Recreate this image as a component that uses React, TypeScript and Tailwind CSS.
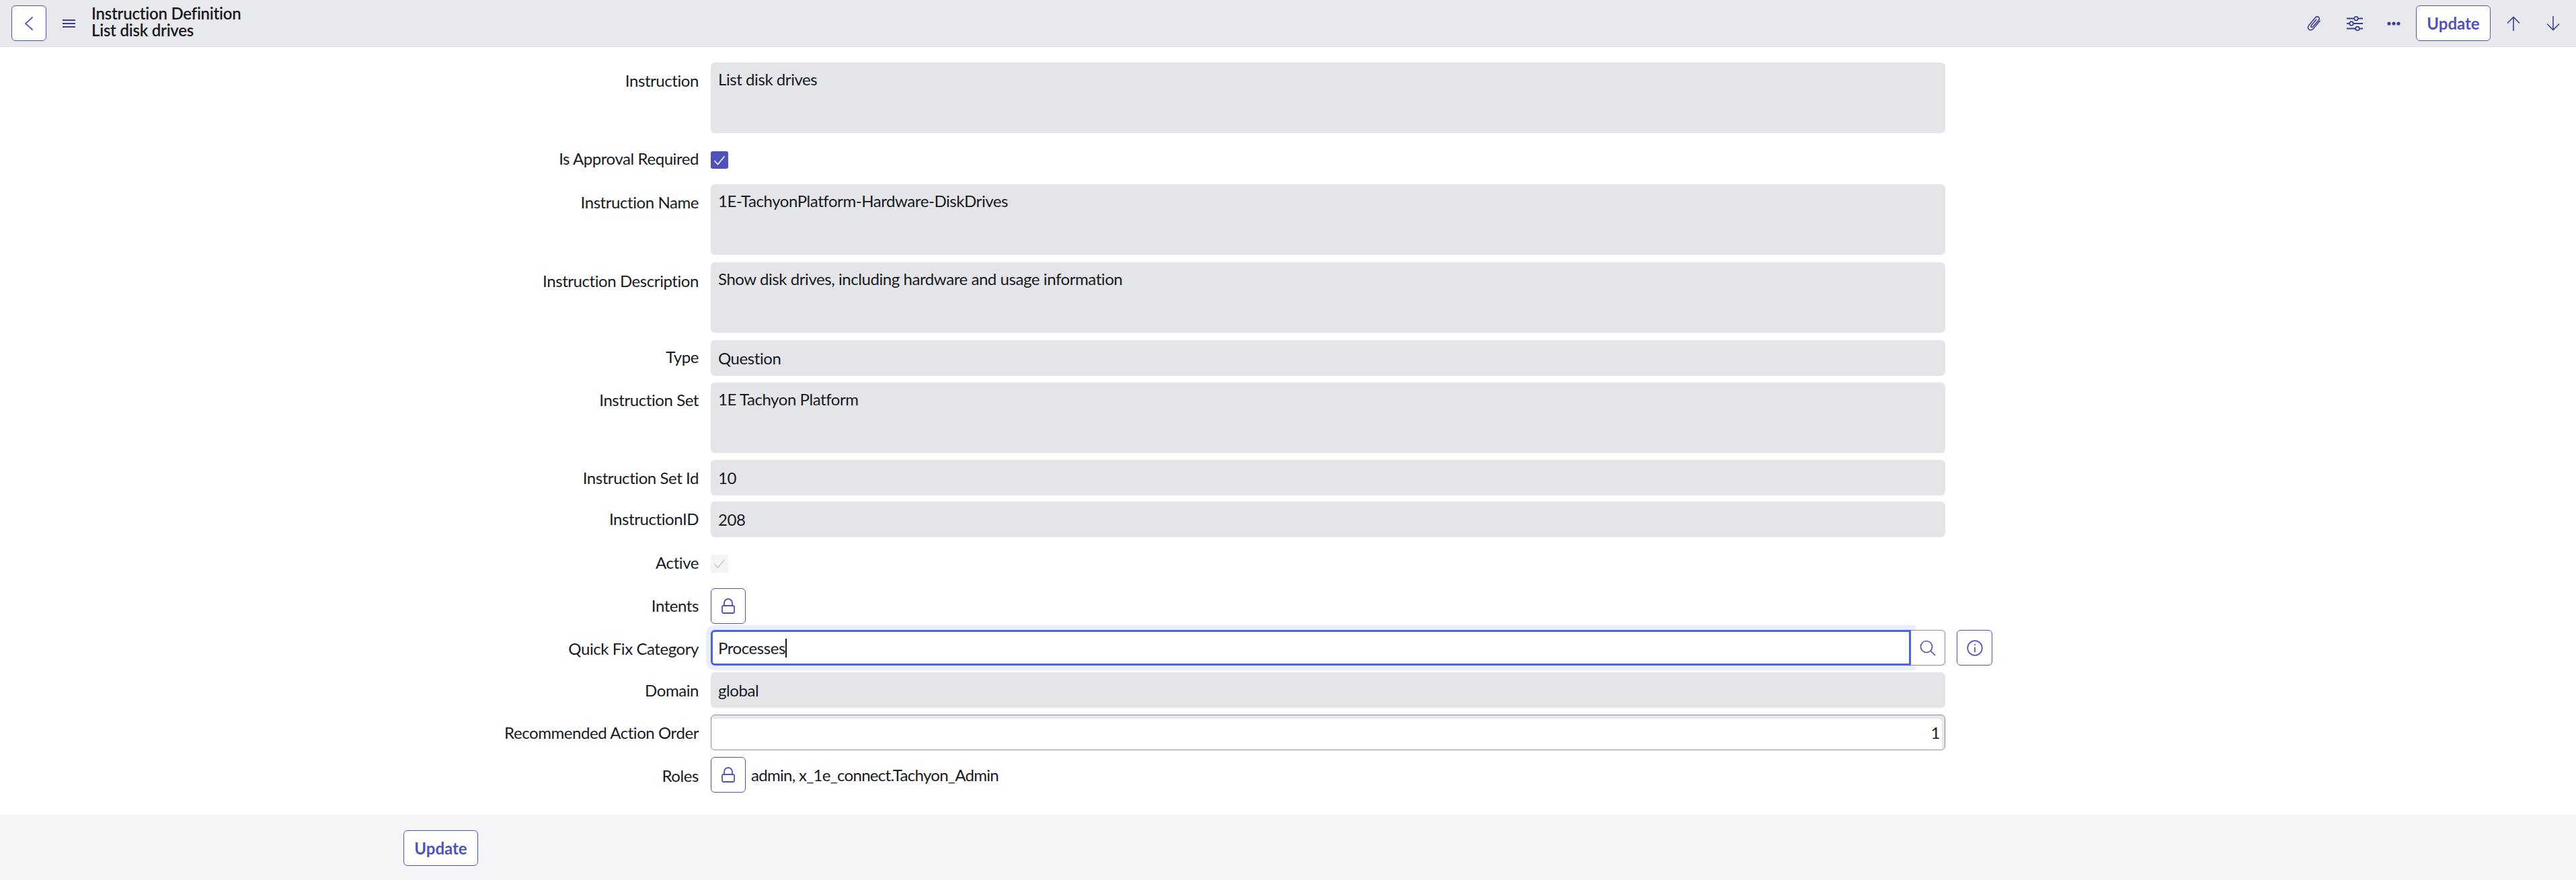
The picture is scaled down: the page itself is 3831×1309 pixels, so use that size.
const font = "font-['Lato','Noto_Sans',sans-serif]";

function Lock() {
  return (
    <svg width="20" height="23" viewBox="0 0 20 23" fill="none" stroke="#4f52bd" strokeWidth="1.800">
      <path d="M4 11V7a6 6 0 0 1 12 0v4" />
      <rect x="1" y="11" width="18" height="11" rx="2" />
    </svg>
  );
}

function Check({ color }: { color: string }) {
  return (
    <svg width="18" height="15" viewBox="0 0 18 15" fill="none" stroke={color} strokeWidth="1.6">
      <path d="M1.5 8l5 5.5L16.5 1.5" />
    </svg>
  );
}

function Row(prop: { label: string; className?: string; labelClass?: string; children: React.ReactNode }) {
  return (
    <div className={`flex ${prop.className ?? ''}`}>
      <div className={`w-[1039px] shrink-0 text-right text-[#181a1f] ${prop.labelClass ?? 'pt-[9px]'}`}>{prop.label}</div>
      <div className="ml-[18px] flex flex-1">{prop.children}</div>
    </div>
  );
}

function ReadOnly(prop: { value: string; tall?: boolean }) {
  return (
    <div className={`w-[1836px] rounded-[6px] bg-[#e4e5e9] px-[11px] text-[#181a1f] ${prop.tall ? 'h-[105px] pt-[10px]' : 'flex h-[53px] items-center'}`}>
      {prop.value}
    </div>
  );
}

function LockButton() {
  return (
    <button className="flex h-[53px] w-[52px] items-center justify-center rounded-[6px] border border-[#4f52bd] bg-white">
      <Lock />
    </button>
  );
}

function OutlineButton(prop: { className?: string }) {
  return (
    <button className={`h-[53px] w-[111px] rounded-[6px] border border-[#4f52bd] bg-white text-[24px] font-bold tracking-normal text-[#4f52bd] ${prop.className ?? ''}`}>
      Update
    </button>
  );
}

export default function App() {
  return (
    <div className={`flex h-[1309px] w-[3831px] flex-col overflow-hidden bg-white text-[24px] leading-[30px] tracking-[-0.43px] ${font}`}>
      <header className="flex h-[70px] shrink-0 items-center border-b border-[#e0e1e5] bg-[#e8e9ed] pl-[17px] pr-[24px]">
        <button className="flex h-[53px] w-[52px] items-center justify-center rounded-[6px] border border-[#4f52bd] bg-white">
          <svg width="14" height="22" viewBox="0 0 14 22" fill="none" stroke="#4f52bd" strokeWidth="1.7">
            <path d="M12.5 1.5L2 11l10.5 9.5" />
          </svg>
        </button>
        <svg className="ml-[24px]" width="19" height="14" viewBox="0 0 19 14" fill="none" stroke="#3c3f8f" strokeWidth="2">
          <path d="M0 2h19M0 7h19M0 12h19" />
        </svg>
        <div className="mb-[5px] ml-[24px] text-[24px] font-semibold leading-[25px] tracking-[-0.23px] text-[#181a1f]">
          <div>Instruction Definition</div>
          <div>List disk drives</div>
        </div>
        <div className="ml-auto flex items-center">
          <svg width="22" height="24" viewBox="0 0 22 24" fill="none" stroke="#3c3f8f" strokeWidth="1.6">
            <path d="M19.5 7.5L9.5 19.5c-2 2.4-4.6 2.9-6.5 1.3s-1.9-4.2.1-6.6L12 3.5c1.6-1.9 3.6-2.4 5.1-1.2s1.4 3.2-.2 5.1L9 16.5c-.9 1-2 1.3-2.7.7s-.6-1.7.3-2.8l7.6-9" />
          </svg>
          <svg className="ml-[37px]" width="24" height="22" viewBox="0 0 24 22" fill="none" stroke="#3c3f8f" strokeWidth="1.8">
            <path d="M0 3.5h11M17 3.5h7M0 11h4M10 11h14M0 18.500h13M19 18.500h5" />
            <circle cx="14" cy="3.500" r="2.800" />
            <circle cx="7" cy="11" r="2.800" />
            <circle cx="16" cy="18.500" r="2.800" />
          </svg>
          <svg className="ml-[36px]" width="20" height="6" viewBox="0 0 20 6" fill="#3c3f8f">
            <circle cx="3" cy="3" r="2.600" />
            <circle cx="10" cy="3" r="2.600" />
            <circle cx="17" cy="3" r="2.600" />
          </svg>
          <OutlineButton className="ml-[23px]" />
          <svg className="ml-[24px]" width="20" height="22" viewBox="0 0 20 22" fill="none" stroke="#3c3f8f" strokeWidth="1.6">
            <path d="M10 22V1.500M1 10.500l9-9 9 9" />
          </svg>
          <svg className="ml-[39px]" width="20" height="22" viewBox="0 0 20 22" fill="none" stroke="#3c3f8f" strokeWidth="1.6">
            <path d="M10 0v20.500M1 11.500l9 9 9-9" />
          </svg>
        </div>
      </header>

      <main className="flex-1 pt-[23px]">
        <Row label="Instruction" labelClass="pt-[12px]">
          <ReadOnly tall value="List disk drives" />
        </Row>
        <Row label="Is Approval Required" className="mt-[27px]" labelClass="leading-[26px] -mt-[2px]">
          <div className="flex h-[26px] w-[26px] items-center justify-center rounded-[3px] bg-[#4f52bd]">
            <Check color="#ffffff" />
          </div>
        </Row>
        <Row label="Instruction Name" className="mt-[23px]" labelClass="pt-[12px]">
          <ReadOnly tall value="1E-TachyonPlatform-Hardware-DiskDrives" />
        </Row>
        <Row label="Instruction Description" className="mt-[11px]" labelClass="pt-[13px]">
          <ReadOnly tall value="Show disk drives, including hardware and usage information" />
        </Row>
        <Row label="Type" className="mt-[11px]" labelClass="pt-[10px]">
          <ReadOnly value="Question" />
        </Row>
        <Row label="Instruction Set" className="mt-[10px]" labelClass="pt-[11px]">
          <ReadOnly tall value="1E Tachyon Platform" />
        </Row>
        <Row label="Instruction Set Id" className="mt-[10px]" labelClass="pt-[12px]">
          <ReadOnly value="10" />
        </Row>
        <Row label="InstructionID" className="mt-[9px]" labelClass="pt-[11px]">
          <ReadOnly value="208" />
        </Row>
        <Row label="Active" className="mt-[26px]" labelClass="leading-[27px] -mt-[2px]">
          <div className="flex h-[27px] w-[26px] items-center justify-center rounded-[3px] bg-[#f4f4f6]">
            <Check color="#c9cacf" />
          </div>
        </Row>
        <Row label="Intents" className="mt-[23px]" labelClass="pt-[11px]">
          <LockButton />
        </Row>
        <Row label="Quick Fix Category" className="mt-[9px]" labelClass="pt-[13px]">
          <div className="flex h-[53px] w-[1785px] items-center rounded-l-[6px] border-[3px] border-[#4a62e8] bg-white pl-[8px] text-[#181a1f] shadow-[0_0_0_7px_#eaedfc]">
            Processes
            <span className="h-[28px] w-[2px] bg-[#181a1f]" />
          </div>
          <button className="flex h-[53px] w-[51px] items-center justify-center rounded-r-[6px] border border-l-0 border-[#868e96] bg-white">
            <svg width="24" height="24" viewBox="0 0 24 24" fill="none" stroke="#4f52bd" strokeWidth="1.7">
              <circle cx="10" cy="10" r="8.500" />
              <path d="M16 16l7 7" />
            </svg>
          </button>
          <button className="ml-[17px] flex h-[53px] w-[53px] items-center justify-center rounded-[6px] border border-[#4f52bd] bg-white">
            <svg width="24" height="24" viewBox="0 0 24 24" fill="none" stroke="#4f52bd" strokeWidth="1.7">
              <circle cx="12" cy="12" r="10.800" />
              <path d="M12 10.500V18M12 6v2" />
            </svg>
          </button>
        </Row>
        <Row label="Domain" className="mt-[10px]" labelClass="pt-[12px]">
          <ReadOnly value="global" />
        </Row>
        <Row label="Recommended Action Order" className="mt-[10px]" labelClass="pt-[12px]">
          <div className="flex h-[53px] w-[1836px] items-center justify-end rounded-[6px] border border-[#868e96] bg-white pr-[7px] text-[#181a1f] shadow-[inset_-4px_5px_0_#e6e7ea]">
            1
          </div>
        </Row>
        <Row label="Roles" className="mt-[10px]" labelClass="pt-[13px]">
          <LockButton />
          <div className="ml-[8px] flex items-center tracking-[-0.7px] text-[#181a1f]">admin, x_1e_connect.Tachyon_Admin</div>
        </Row>
      </main>

      <footer className="flex h-[97px] shrink-0 items-start bg-[#f5f5f7] pl-[600px] pt-[23px]">
        <OutlineButton />
      </footer>
    </div>
  );
}
